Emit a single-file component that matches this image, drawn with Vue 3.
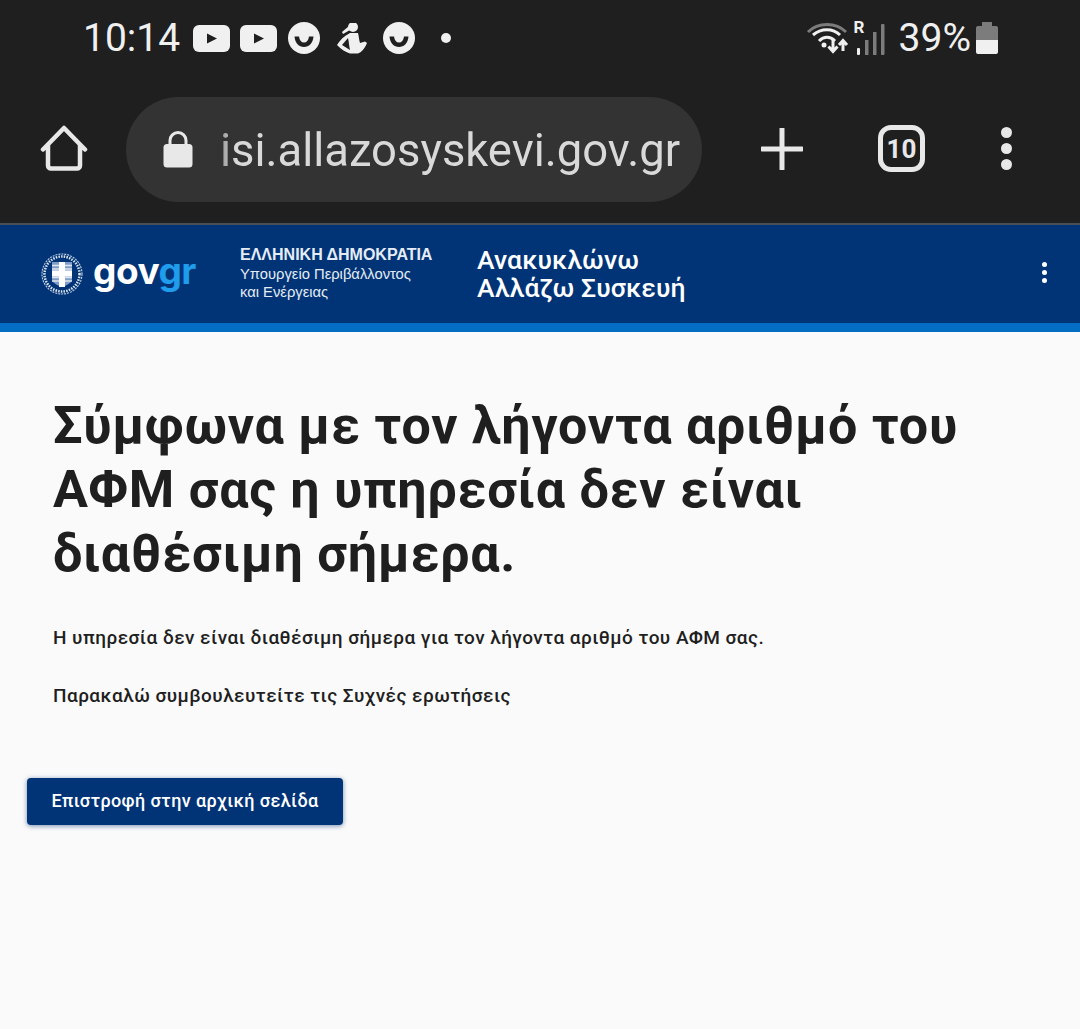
<template>
  <div class="page">
    <div class="statusbar">
      <div class="st-left">
        <span class="time">10:14</span>
        <svg class="ic yt" viewBox="0 0 37 27"><rect width="37" height="27" rx="6" fill="#f0f0f0"/><path d="M14 8.500 L24 13.500 L14 18.500Z" fill="#1f1f1f"/></svg>
        <svg class="ic yt yt2" viewBox="0 0 37 27"><rect width="37" height="27" rx="6" fill="#f0f0f0"/><path d="M14 8.500 L24 13.500 L14 18.500Z" fill="#1f1f1f"/></svg>
        <svg class="ic smile s1" viewBox="0 0 32 32"><circle cx="16" cy="16" r="16" fill="#f0f0f0"/><path d="M6.500 14.500h4.500c.6 4 2.400 6 5 6s4.400-2 5-6h4.500c-.5 6.500-4.500 10.500-9.500 10.500s-9-4-9.500-10.500z" fill="#1f1f1f"/></svg>
        <svg class="ic figure" viewBox="3 5 32 32">
          <circle cx="19" cy="9" r="5" fill="#f0f0f0"/>
          <path d="M15 8 8 14l1 2 7-4z" fill="#f0f0f0"/>
          <path d="M16 15h8c1 4 1 7 2 10l5-1.500 2 1.500c-2 5-5 9-9 10.500h-8C12 34.500 7 31 3 27c3-5 7-9 13-12zM14 20l-6 7 8 5c-1-4-1-8-2-12z" fill="#f0f0f0" fill-rule="evenodd"/>
        </svg>
        <svg class="ic smile s2" viewBox="0 0 32 32"><circle cx="16" cy="16" r="16" fill="#f0f0f0"/><path d="M6.500 14.500h4.500c.6 4 2.400 6 5 6s4.400-2 5-6h4.500c-.5 6.500-4.500 10.500-9.500 10.500s-9-4-9.500-10.500z" fill="#1f1f1f"/></svg>
        <span class="dot"></span>
      </div>
      <div class="st-right">
        <svg class="ic wifi" viewBox="0 0 44 34">
          <path d="M2 11C12 1 30 1 40 11" fill="none" stroke="#7c7c7c" stroke-width="3"/>
          <path d="M7 14C15 7 27 7 34 14" fill="none" stroke="#f0f0f0" stroke-width="3"/>
          <path d="M13 20C18 15 24 15 29 20" fill="none" stroke="#f0f0f0" stroke-width="3"/>
          <circle cx="18" cy="24" r="2.500" fill="#f0f0f0"/>
          <path d="M27 19v11M22.500 25.500l4.500 5 4.500-5M37 30V20M33 24l4-4.500 4 4.500" fill="none" stroke="#f0f0f0" stroke-width="3"/>
        </svg>
        <div class="signal">
          <span class="roam">R</span>
          <svg class="ic bars" viewBox="0 0 30 31">
            <rect x="2" y="24" width="3" height="7" rx="1" fill="#f0f0f0"/>
            <rect x="10" y="16" width="3.500" height="15" fill="#7c7c7c"/>
            <rect x="18" y="8" width="3.500" height="23" fill="#7c7c7c"/>
            <rect x="26" y="0" width="3.500" height="31" rx="1" fill="#7c7c7c"/>
          </svg>
        </div>
        <span class="pct">39%</span>
        <svg class="ic batt" viewBox="0 0 22 32">
          <path d="M6 0h10v4h4a2 2 0 0 1 2 2v12H0V6a2 2 0 0 1 2-2h4z" fill="#7c7c7c"/>
          <path d="M0 18h22v12a2 2 0 0 1-2 2H2a2 2 0 0 1-2-2z" fill="#f0f0f0"/>
        </svg>
      </div>
    </div>

    <div class="toolbar">
      <svg class="ic home" viewBox="0 0 48 48">
        <path d="M3 24.500 24 3l21 21.500M8 20v20.500a3 3 0 0 0 3 3h26a3 3 0 0 0 3-3V20" fill="none" stroke="#e8e8e8" stroke-width="4.500" stroke-linecap="round" stroke-linejoin="round"/>
      </svg>
      <div class="omnibox">
        <svg class="ic lock" viewBox="0 0 30 37">
          <path d="M7 15V9.500a8 8 0 0 1 16 0V15" fill="none" stroke="#e8e8e8" stroke-width="3"/>
          <rect x="0.500" y="13" width="29" height="23.500" rx="3.500" fill="#e8e8e8"/>
        </svg>
        <span class="url">isi.allazosyskevi.gov.gr</span>
      </div>
      <svg class="ic plus" viewBox="0 0 42 42">
        <path d="M21 1v40M1 21h40" stroke="#e8e8e8" stroke-width="5" stroke-linecap="round"/>
      </svg>
      <div class="tabs">10</div>
      <div class="menu-dots"><span></span><span></span><span></span></div>
    </div>

    <header class="gov-header">
      <div class="gov-logo">
        <svg class="ic emblem" viewBox="0 0 44 44">
          <circle cx="22" cy="22" r="20" fill="none" stroke="#b9c8de" stroke-width="1.200" stroke-dasharray="2 1"/>
          <circle cx="22" cy="22" r="17.500" fill="none" stroke="#dfe6f1" stroke-width="2.500" stroke-dasharray="1.500 1.200"/>
          <path d="M12 10h20v17c0 4-5 6-10 8-5-2-10-4-10-8z" fill="#7f9cc6"/>
          <path d="M12 13.500h20M12 17h20M12 25.500h20M12 29h20" stroke="#dde5f0" stroke-width="1.400"/>
          <path d="M22 10v25M12 21.500h20" stroke="#fff" stroke-width="6"/>
        </svg>
        <span class="gov-word">gov<b>gr</b></span>
      </div>
      <div class="ministry">
        <div class="m-top">ΕΛΛΗΝΙΚΗ ΔΗΜΟΚΡΑΤΙΑ</div>
        <div class="m-sub">Υπουργείο Περιβάλλοντος</div>
        <div class="m-sub">και Ενέργειας</div>
      </div>
      <div class="service">Ανακυκλώνω<br />Αλλάζω Συσκευή</div>
      <div class="hdr-dots"><span></span><span></span><span></span></div>
    </header>
    <div class="stripe"></div>

    <main class="content">
      <h1>Σύμφωνα με τον λήγοντα αριθμό του ΑΦΜ σας η υπηρεσία δεν είναι διαθέσιμη σήμερα.</h1>
      <p class="first">Η υπηρεσία δεν είναι διαθέσιμη σήμερα για τον λήγοντα αριθμό του ΑΦΜ σας.</p>
      <p class="second">Παρακαλώ συμβουλευτείτε τις Συχνές ερωτήσεις</p>
      <button class="back" type="button">Επιστροφή στην αρχική σελίδα</button>
    </main>
  </div>
</template>

<script setup>
</script>

<style>
html, body { margin: 0; background: #fafafa; }
</style>

<style scoped>
.page {
  width: 1080px;
  height: 1029px;
  overflow: hidden;
  background: #fafafa;
  font-family: Roboto, "Noto Sans", sans-serif;
}
.ic { display: block; flex: none; }

.statusbar {
  height: 76px;
  background: #1f1f1f;
  display: flex;
  justify-content: space-between;
  align-items: center;
  padding: 0 82px 0 83px;
  box-sizing: border-box;
  color: #f0f0f0;
}
.st-left, .st-right { display: flex; align-items: center; }
.time { font-size: 39px; width: 110px; }
.yt { width: 37px; height: 27px; }
.yt2 { margin-left: 10px; }
.smile { width: 32px; height: 32px; }
.s1 { margin-left: 11px; }
.figure { width: 32px; height: 32px; margin: 2px 0 0 17px; }
.s2 { margin-left: 14px; }
.dot { width: 10px; height: 10px; border-radius: 50%; background: #f0f0f0; margin-left: 26px; }
.wifi { width: 44px; height: 34px; }
.signal { position: relative; margin-left: 5px; margin-top: 2px; }
.bars { width: 30px; height: 31px; }
.roam {
  position: absolute;
  left: -1px;
  top: -7px;
  font-size: 17px;
  font-weight: 700;
  line-height: 20px;
}
.pct { font-size: 39px; margin-left: 14px; }
.batt { width: 22px; height: 32px; margin-left: 5px; }

.toolbar {
  height: 147px;
  background: #1f1f1f;
  display: flex;
  align-items: center;
  padding-bottom: 2px;
  box-sizing: border-box;
}
.home { width: 48px; height: 48px; margin-left: 40px; }
.omnibox {
  width: 576px;
  height: 105px;
  margin: 2px 0 0 38px;
  border-radius: 53px;
  background: #333333;
  display: flex;
  align-items: center;
  overflow: hidden;
}
.lock { width: 30px; height: 37px; margin-left: 37px; }
.url {
  margin-left: 27px;
  font-size: 45.400px;
  color: #d9d9d9;
  white-space: nowrap;
  padding-top: 2px;
  -webkit-mask-image: linear-gradient(90deg, rgba(0, 0, 0, .6), #000 16px);
  mask-image: linear-gradient(90deg, rgba(0, 0, 0, .6), #000 16px);
}
.plus { width: 42px; height: 42px; margin-left: 59px; }
.tabs {
  width: 47px;
  height: 47px;
  margin-left: 75px;
  box-sizing: border-box;
  border: 5px solid #e8e8e8;
  border-radius: 13px;
  color: #e8e8e8;
  font-size: 26px;
  font-weight: 700;
  display: flex;
  align-items: center;
  justify-content: center;
}
.menu-dots {
  margin-left: 76px;
  display: flex;
  flex-direction: column;
  gap: 5px;
}
.menu-dots span { width: 11px; height: 11px; border-radius: 50%; background: #e8e8e8; }

.gov-header {
  height: 98px;
  border-top: 2px solid #4a4f57;
  background: #003476;
  display: flex;
  align-items: center;
  color: #fff;
  position: relative;
  padding-left: 40px;
}
.gov-logo { display: flex; align-items: center; width: 200px; }
.emblem { width: 44px; height: 44px; }
.gov-word {
  margin: -6px 0 0 9px;
  font-family: Inter, sans-serif;
  font-size: 37px;
  font-weight: 700;
  line-height: 44px;
  letter-spacing: -0.500px;
}
.gov-word b { color: #1f9cec; font-weight: 700; }
.ministry {
  width: 237px;
  margin-top: -3px;
  color: #e6ecf5;
  font-family: "Liberation Sans", Arial, sans-serif;
}
.m-top { font-size: 16px; font-weight: 700; line-height: 20px; white-space: nowrap; }
.m-sub { font-size: 14.750px; line-height: 18px; white-space: nowrap; }
.service { font-size: 26.500px; font-weight: 500; line-height: 28px; letter-spacing: .1px; margin-top: -1px; }
.hdr-dots {
  position: absolute;
  right: 33px;
  top: 37px;
  display: flex;
  flex-direction: column;
  gap: 3px;
}
.hdr-dots span { width: 5px; height: 5px; border-radius: 50%; background: #fff; }
.stripe { height: 9px; background: #046ec5; }

.content {
  padding: 0 53px;
  color: #1f1f1f;
}
h1 {
  margin: 62px 0 0;
  font-size: 52px;
  line-height: 64px;
  font-weight: 700;
  letter-spacing: .72px;
}
p { margin: 0; font-size: 19px; font-weight: 500; line-height: 24px; letter-spacing: .46px; }
.first { margin-top: 40px; }
.second { margin-top: 34px; }
.back {
  display: block;
  margin: 70px 0 0 -26px;
  width: 316px;
  height: 47px;
  padding: 0 0 2px;
  border: 0;
  border-radius: 4px;
  background: #003476;
  color: #fff;
  font-family: inherit;
  font-size: 18px;
  font-weight: 500;
  letter-spacing: .4px;
  box-shadow: 0 1px 5px rgba(0, 52, 118, .55);
}
</style>
